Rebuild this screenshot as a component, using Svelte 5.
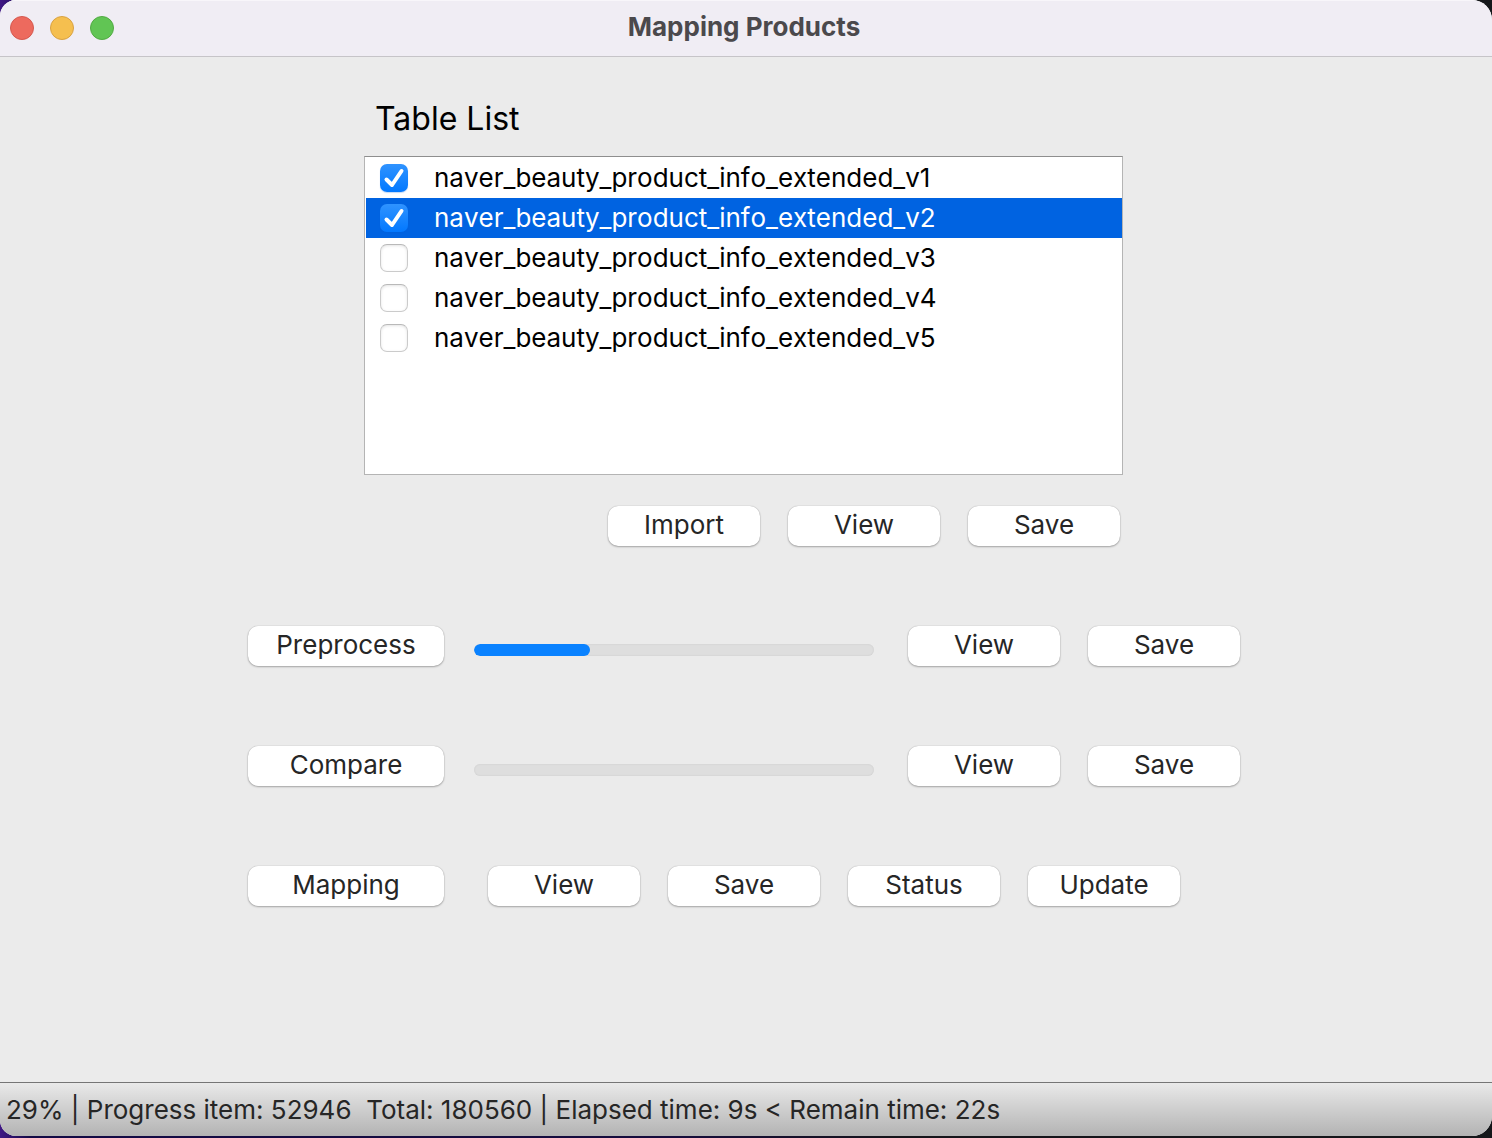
<script>
  let tables = $state([
    { name: 'naver_beauty_product_info_extended_v1', checked: true },
    { name: 'naver_beauty_product_info_extended_v2', checked: true },
    { name: 'naver_beauty_product_info_extended_v3', checked: false },
    { name: 'naver_beauty_product_info_extended_v4', checked: false },
    { name: 'naver_beauty_product_info_extended_v5', checked: false }
  ]);
  let selected = $state(1);

  const stages = [
    { name: 'Preprocess', progress: 29 },
    { name: 'Compare', progress: 0 }
  ];
</script>

<div class="desktop">
  <div class="window">
    <header class="titlebar">
      <div class="lights">
        <button class="light close" aria-label="Close"></button>
        <button class="light minimize" aria-label="Minimize"></button>
        <button class="light zoom" aria-label="Zoom"></button>
      </div>
      <h1>Mapping Products</h1>
    </header>

    <main>
      <section class="tables">
        <h2>Table List</h2>
        <ul>
          {#each tables as table, i}
            <li class:selected={selected === i}>
              <label>
                <input type="checkbox" bind:checked={table.checked} onchange={() => (selected = i)} />
                <svg class="tick" viewBox="0 0 28 28" aria-hidden="true">
                  <path d="M6.5 15.5 L12 21 L21.5 7" />
                </svg>
                <span>{table.name}</span>
              </label>
            </li>
          {/each}
        </ul>
        <div class="actions">
          <button class="push">Import</button>
          <button class="push">View</button>
          <button class="push">Save</button>
        </div>
      </section>

      {#each stages as stage}
        <div class="row">
          <button class="push wide">{stage.name}</button>
          <progress max="100" value={stage.progress} aria-label="{stage.name} progress"></progress>
          <div class="group">
            <button class="push">View</button>
            <button class="push">Save</button>
          </div>
        </div>
      {/each}

      <div class="row mapping">
        <button class="push wide">Mapping</button>
        <div class="group">
          <button class="push">View</button>
          <button class="push">Save</button>
          <button class="push">Status</button>
          <button class="push">Update</button>
        </div>
      </div>
    </main>

    <footer>29% | Progress item: 52946&nbsp; Total: 180560 | Elapsed time: 9s &lt; Remain time: 22s</footer>
  </div>
</div>

<style>
  :global(body) {
    margin: 0;
  }
  .desktop {
    display: flex;
    box-sizing: border-box;
    min-height: 100vh;
    padding-bottom: 2px;
    background: linear-gradient(90deg, #3f1784 0%, #130a45 2%, #150c3c 45%, #15141a 60%, #15171a 100%);
    font-family: Inter, 'Liberation Sans', sans-serif;
    font-size: 26px;
    line-height: 32px;
    color: #262626;
  }
  .window {
    flex: 1;
    display: flex;
    flex-direction: column;
    overflow: hidden;
    border-radius: 16px 20px 20px 16px;
    background: #ebebeb;
  }
  .titlebar {
    display: grid;
    grid-template-columns: 1fr auto 1fr;
    align-items: center;
    box-sizing: border-box;
    height: 57px;
    padding: 0 14px 0 10px;
    border-top: 1px solid #f8f6fa;
    border-bottom: 1px solid #c6c4c8;
    background: #f0edf4;
  }
  .lights {
    display: flex;
    gap: 16px;
    padding-bottom: 2px;
  }
  .light {
    width: 24px;
    height: 24px;
    padding: 0;
    border: 1px solid;
    border-radius: 50%;
  }
  .close {
    background: #ed6a5e;
    border-color: #d4594f;
  }
  .minimize {
    background: #f5bf4f;
    border-color: #d8a243;
  }
  .zoom {
    background: #61c554;
    border-color: #52aa43;
  }
  h1 {
    margin: 0;
    padding-bottom: 4px;
    font-size: 26px;
    line-height: 32px;
    font-weight: 700;
    color: #4b494c;
  }
  main {
    flex: 1;
    display: flex;
    flex-direction: column;
    align-items: center;
    gap: 80px;
    padding: 42px 4px 80px 0;
  }
  .tables {
    width: 760px;
    max-width: 100%;
  }
  h2 {
    margin: 0 0 17px;
    padding-left: 11px;
    font-size: 32px;
    line-height: 40px;
    font-weight: 400;
    color: #000;
  }
  ul {
    box-sizing: border-box;
    min-height: 319px;
    margin: 0 1px 0 0;
    padding: 1px 0 0 1px;
    border: 1px solid #b4b4b4;
    border-top-color: #8e8e8e;
    background: #fff;
    list-style: none;
    color: #000;
    font-kerning: none;
  }
  label {
    display: grid;
    grid-template-columns: 28px 1fr;
    column-gap: 26px;
    align-items: center;
    height: 40px;
    padding-left: 14px;
  }
  .selected {
    background: #0063e1;
    color: #fff;
  }
  input {
    grid-area: 1 / 1;
    appearance: none;
    width: 28px;
    height: 28px;
    margin: 0;
    border: 1px solid #cbcbcb;
    border-top-color: #b9b9b9;
    border-radius: 7px;
    background: #fff;
    box-shadow: inset 0 1px 3px #0000001c;
  }
  input:checked {
    border: 0;
    background: linear-gradient(#2f93ff, #0278ff);
    box-shadow: 0 1px 1px #0060d83d;
  }
  .tick {
    grid-area: 1 / 1;
    width: 28px;
    height: 28px;
    fill: none;
    stroke: #fff;
    stroke-width: 4;
    stroke-linecap: round;
    stroke-linejoin: round;
    visibility: hidden;
    pointer-events: none;
  }
  input:checked + .tick {
    visibility: visible;
  }
  .actions,
  .group {
    display: flex;
    gap: 28px;
  }
  .actions {
    justify-content: flex-end;
    margin-top: 31px;
    padding-right: 4px;
  }
  .push {
    width: 152px;
    height: 40px;
    padding: 0 0 2px;
    border: 0;
    border-radius: 10px;
    background: #fff;
    box-shadow: 0 0 1px #00000050, 0 1px 2px #00000048;
    font: inherit;
    color: #262626;
  }
  .wide {
    width: 196px;
  }
  .row {
    display: flex;
    align-items: center;
    width: 992px;
    max-width: 100%;
  }
  .row .group {
    margin-left: 34px;
  }
  .row.mapping .group {
    margin-left: 44px;
  }
  progress {
    appearance: none;
    flex: 1;
    min-width: 0;
    height: 12px;
    margin: 8px 0 0 30px;
    border: 0;
    border-radius: 6px;
    overflow: hidden;
    background: #dedede;
    box-shadow: inset 0 0 2px #00000018;
  }
  progress::-webkit-progress-bar {
    background: transparent;
  }
  progress::-webkit-progress-value {
    border-radius: 6px;
    background: #0a82ff;
  }
  footer {
    box-sizing: border-box;
    padding: 11px 6px 10px;
    border-top: 1px solid #757575;
    background: linear-gradient(#e9e9e9, #b3b3b3);
  }
</style>
